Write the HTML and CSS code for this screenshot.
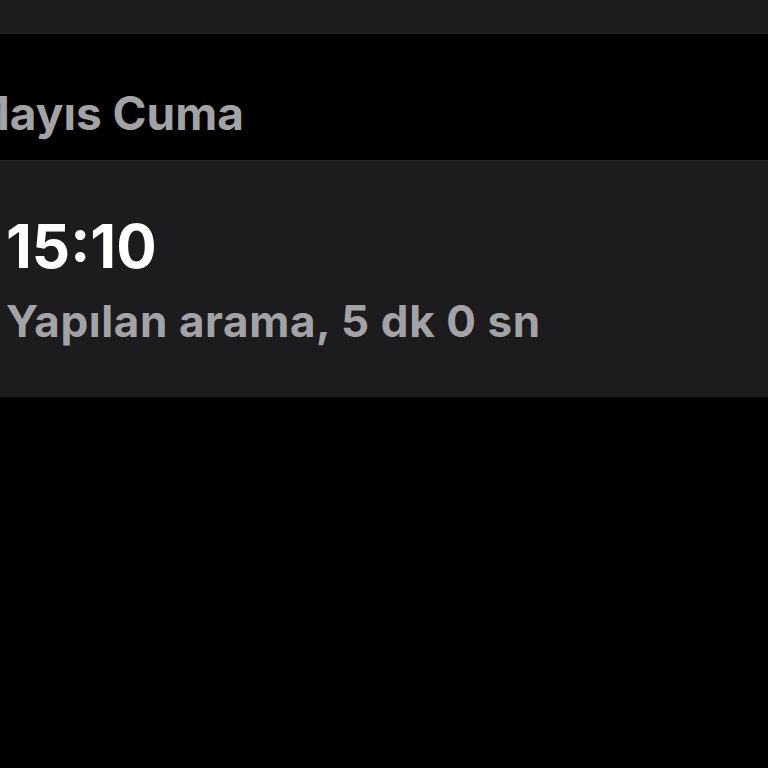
FILE: index.html
```html
<!DOCTYPE html>
<html lang="tr">
<head>
  <meta charset="UTF-8">
  <meta name="viewport" content="width=device-width, initial-scale=1.0">
  <title>Arama Ayrıntıları</title>
  <link rel="stylesheet" href="styles.css">
</head>
<body>
  <div class="topbar"></div>

  <div class="day">
    <h2>Mayıs Cuma</h2>
  </div>

  <div class="call-card">
    <div class="time">15:10</div>
    <div class="detail">Yapılan arama, 5 dk 0 sn</div>
  </div>
</body>
</html>
```

FILE: styles.css
```css
html, body {
  margin: 0;
  padding: 0;
  background: #000;
  overflow-x: hidden;
  font-family: Inter, "Noto Sans", sans-serif;
}
.topbar {
  height: 33px;
  background: #1c1c1e;
  border-bottom: 1px solid #242426;
}
.day {
  padding: 52px 0 20px;
}
.day h2 {
  margin: 0 0 0 -33px;
  font-size: 46px;
  line-height: 54px;
  font-weight: 700;
  color: #a3a3a6;
  white-space: nowrap;
}
.call-card {
  background: #1c1c1e;
  border-top: 1px solid #232325;
  padding: 50px 0 50px 6px;
}
.time {
  font-size: 60px;
  line-height: 70px;
  font-weight: 700;
  color: #fff;
}
.detail {
  margin-top: 14px;
  font-size: 44px;
  line-height: 52px;
  font-weight: 700;
  letter-spacing: 0.6px;
  color: #a3a3a6;
  white-space: nowrap;
}
```
